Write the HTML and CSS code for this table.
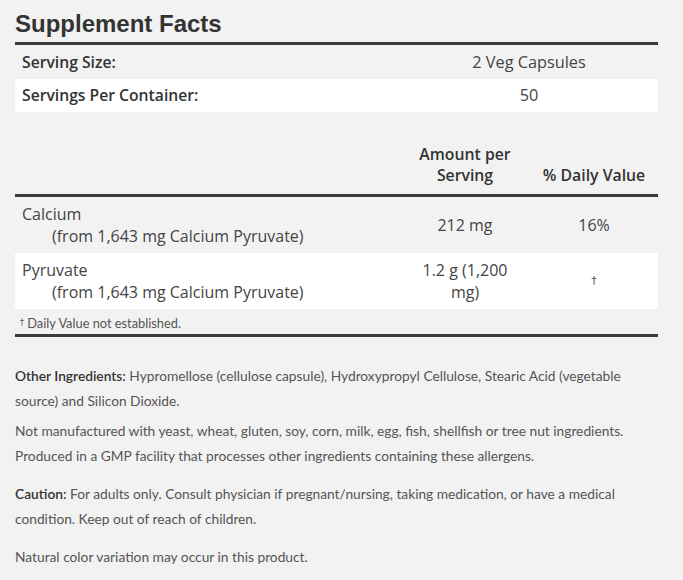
FILE: index.html
```html
<!DOCTYPE html>
<html>
<head>
<meta charset="utf-8">
<link rel="stylesheet" href="styles.css">
</head>
<body>
<div class="wrap">
  <h1 class="title">Supplement Facts</h1>
  <div class="serving">
    <div class="srow gray"><span class="slabel">Serving Size:</span><span class="sval">2 Veg Capsules</span></div>
    <div class="srow white"><span class="slabel">Servings Per Container:</span><span class="sval">50</span></div>
  </div>
  <div class="thead">
    <div class="c1"></div>
    <div class="c2">Amount per<br>Serving</div>
    <div class="c3">% Daily Value</div>
  </div>
  <div class="nrow gray">
    <div class="c1">Calcium<div class="sub">(from 1,643 mg Calcium Pyruvate)</div></div>
    <div class="c2">212 mg</div>
    <div class="c3">16%</div>
  </div>
  <div class="nrow white">
    <div class="c1">Pyruvate<div class="sub">(from 1,643 mg Calcium Pyruvate)</div></div>
    <div class="c2">1.2 g (1,200<br>mg)</div>
    <div class="c3 dag">†</div>
  </div>
  <div class="foot"><span class="fdag">†</span> Daily Value not established.</div>
  <div class="notes">
    <p class="p1"><b>Other Ingredients:</b> Hypromellose (cellulose capsule), Hydroxypropyl Cellulose, Stearic Acid (vegetable source) and Silicon Dioxide.</p>
    <p class="p2">Not manufactured with yeast, wheat, gluten, soy, corn, milk, egg, fish, shellfish or tree nut ingredients. Produced in a GMP facility that processes other ingredients containing these allergens.</p>
    <p class="p3"><b>Caution:</b> For adults only. Consult physician if pregnant/nursing, taking medication, or have a medical condition. Keep out of reach of children.</p>
    <p class="p3">Natural color variation may occur in this product.</p>
  </div>
</div>
</body>
</html>
```
FILE: styles.css
```css
html, body {
  margin: 0;
  padding: 0;
  background: #f2f2f2;
}
body {
  font-family: "Open Sans", "Liberation Sans", sans-serif;
  color: #444;
}
.wrap {
  width: 643px;
  margin-left: 15px;
}
.title {
  margin: 0;
  padding-top: 9px;
  box-sizing: border-box;
  font-family: "Liberation Sans", Arial, sans-serif;
  font-size: 24px;
  line-height: 30px;
  font-weight: bold;
  color: #333;
  border-bottom: 3px solid #3a3a3a;
  height: 45px;
}
.gray { background: #f2f2f2; }
.white { background: #fff; }
.srow {
  display: flex;
  height: 33.5px;
  align-items: center;
  font-size: 15.7px;
}
.slabel {
  width: 385px;
  padding-left: 7px;
  box-sizing: border-box;
  font-weight: 600;
  color: #333;
}
.sval {
  width: 258px;
  text-align: center;
  color: #444;
  font-size: 16.3px;
}
.thead {
  display: flex;
  margin-top: 32px;
  align-items: flex-end;
  padding-bottom: 8px;
  border-bottom: 3px solid #3a3a3a;
  font-size: 15.8px;
  line-height: 21px;
  font-weight: 600;
  color: #333;
}
.c1 {
  width: 385px;
  padding-left: 7px;
  box-sizing: border-box;
}
.c2 {
  width: 130px;
  text-align: center;
}
.c3 {
  width: 128px;
  text-align: center;
}
.nrow {
  display: flex;
  align-items: center;
  height: 56px;
  font-size: 16px;
  line-height: 22px;
  color: #444;
}
.sub {
  padding-left: 30px;
}
.dag {
  font-family: "DejaVu Sans", sans-serif;
  font-size: 11px;
  color: #555;
}
.foot {
  font-family: "Lato", "Liberation Sans", sans-serif;
  font-size: 12.8px;
  line-height: 16px;
  padding: 6px 0 0 5px;
  height: 28px;
  box-sizing: border-box;
  color: #555;
  border-bottom: 3px solid #3a3a3a;
}
.fdag { font-family: "DejaVu Sans", sans-serif; font-size: 8px; vertical-align: 3px; color: #555; }
.notes {
  font-family: "Lato", "Liberation Sans", sans-serif;
  padding-top: 26px;
  font-size: 13.75px;
  line-height: 25px;
  color: #555;
}
.notes p { margin: 0; }
.notes b { font-weight: 600; color: #333; }
.p2 { margin-top: 5px !important; }
.p3 { margin-top: 13px !important; }
```
